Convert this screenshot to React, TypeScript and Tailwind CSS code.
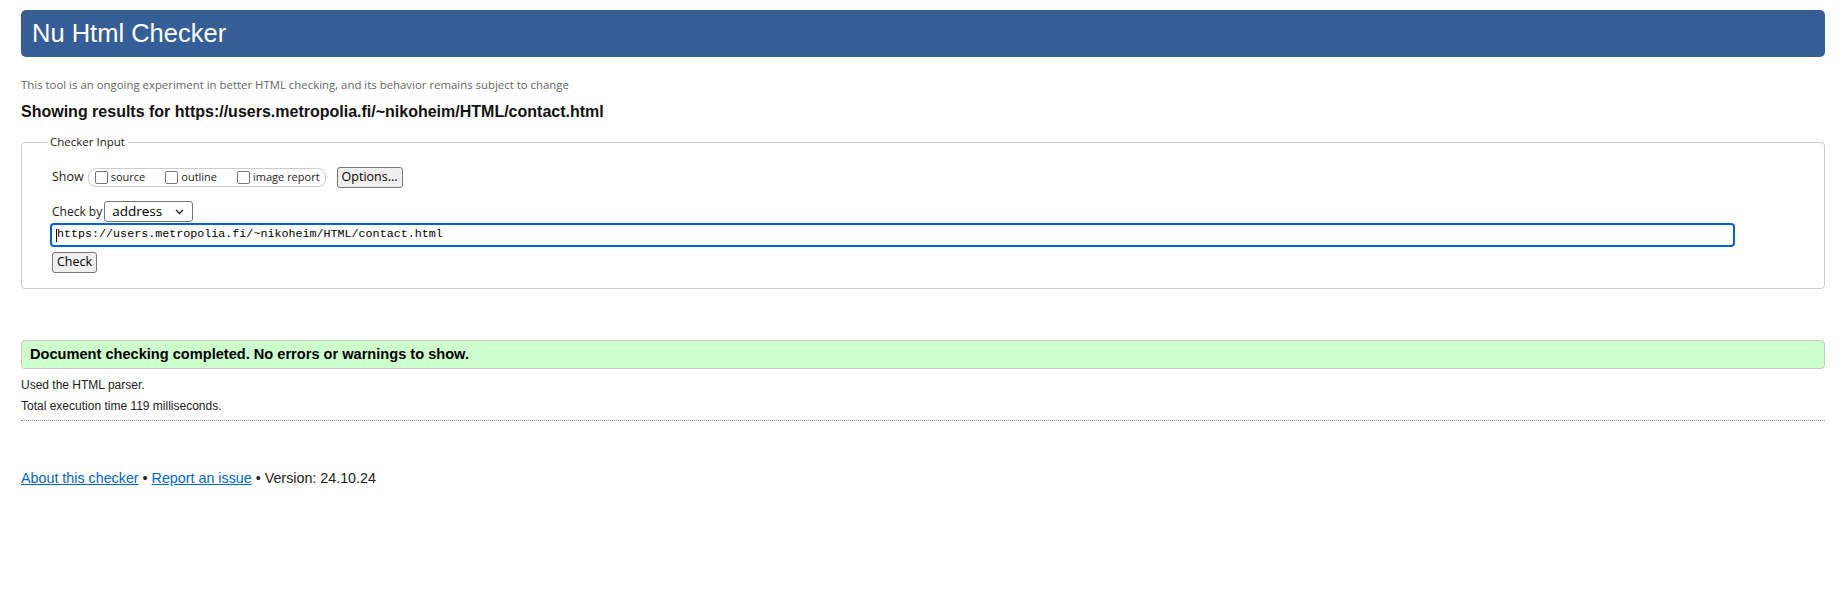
export default function App() {
  const sans = { fontFamily: '"Liberation Sans", Arial, sans-serif' };
  const ui = { fontFamily: '"Open Sans", "Noto Sans", sans-serif' };

  return (
    <div className="min-h-[603px] bg-white px-[21px] pt-[10px] text-[#222]" style={sans}>
      {/* HEADER */}
      <div className="flex h-[47px] items-center rounded-[5px] bg-[#365e96] px-[11px]">
        <h1 className="text-[25.5px] font-normal leading-none text-white">Nu Html Checker</h1>
      </div>

      <p className="mt-[21px] text-[11.4px] leading-[14px] text-[#666]" style={ui}>
        This tool is an ongoing experiment in better HTML checking, and its behavior remains subject to change
      </p>

      <h2 className="mt-[10px] text-[16px] font-bold leading-[20px] text-[#111]">
        Showing results for https://users.metropolia.fi/~nikoheim/HTML/contact.html
      </h2>

      {/* CHECKER INPUT */}
      <fieldset className="mt-[12px] rounded-[4px] border border-[#cccccc]">
        <legend className="ml-[25px] px-[3px] text-[11.5px] leading-[16px] text-[#222]" style={ui}>
          Checker Input
        </legend>

        <div className="pb-[15px] pl-[30px]">
          <div className="mt-[16px] flex h-[22px] items-center" style={ui}>
            <span className="text-[12.5px] text-[#222]">Show</span>
            <div className="ml-[4px] flex h-[19px] items-center rounded-[8px] border border-[#cccccc] pl-[6px] pr-[5px]">
              <label className="flex items-center">
                <span className="h-[13px] w-[13px] rounded-[2px] border border-[#767676] bg-white" />
                <span className="ml-[3px] mr-[20px] text-[11px] text-[#222]">source</span>
              </label>
              <label className="flex items-center">
                <span className="h-[13px] w-[13px] rounded-[2px] border border-[#767676] bg-white" />
                <span className="ml-[3px] mr-[20px] text-[11px] text-[#222]">outline</span>
              </label>
              <label className="flex items-center">
                <span className="h-[13px] w-[13px] rounded-[2px] border border-[#767676] bg-white" />
                <span className="ml-[3px] text-[11px] text-[#222]">image report</span>
              </label>
            </div>
            <button className="ml-[11px] h-[21px] w-[66px] rounded-[3px] border border-[#767676] bg-[#efefef] text-[12.5px] leading-none text-black">
              Options...
            </button>
          </div>

          <div className="mt-[13px] flex h-[21px] items-center" style={ui}>
            <span className="text-[12px] text-[#222]">Check by</span>
            <div className="ml-[2px] flex h-[21px] w-[89px] items-center justify-between rounded-[3px] border border-[#767676] bg-white pl-[7px] pr-[8px]">
              <span className="text-[13.5px] leading-none text-black">address</span>
              <svg width="9" height="6" viewBox="0 0 9 6" fill="none">
                <path d="M1 1l3.5 3.5L8 1" stroke="#222" strokeWidth="1.3" />
              </svg>
            </div>
          </div>

          <div className="-ml-[2px] mt-[1px] flex h-[24px] w-[1685px] items-center rounded-[4px] border-2 border-[#0060df] bg-white pl-[4px]">
            <span className="h-[13px] w-px bg-black" />
            <span
              className="text-[11.7px] leading-none text-black"
              style={{ fontFamily: '"Liberation Mono", "DejaVu Sans Mono", monospace' }}
            >
              https://users.metropolia.fi/~nikoheim/HTML/contact.html
            </span>
          </div>

          <button
            className="mt-[5px] h-[21px] w-[45px] rounded-[3px] border border-[#767676] bg-[#efefef] text-[12.5px] leading-none text-black"
            style={ui}
          >
            Check
          </button>
        </div>
      </fieldset>

      {/* RESULT */}
      <div className="mt-[51px] flex h-[29px] items-center rounded-[4px] border border-[#c8c8c8] bg-[#ccffcc] px-[8px]">
        <p className="text-[14.6px] font-bold leading-none text-black">
          Document checking completed. No errors or warnings to show.
        </p>
      </div>

      <p className="mt-[6px] text-[12px] leading-[21px] text-[#222]">Used the HTML parser.</p>
      <p className="text-[12px] leading-[21px] text-[#222]">Total execution time 119 milliseconds.</p>

      <hr className="mt-[3px] border-0 border-t border-dotted border-[#999]" />

      {/* FOOTER */}
      <p className="mt-[48px] text-[14.3px] leading-[18px] text-[#222]">
        <a href="#" className="text-[#0066cc] underline">About this checker</a>
        {" • "}
        <a href="#" className="text-[#0066cc] underline">Report an issue</a>
        {" • Version: 24.10.24"}
      </p>
    </div>
  );
}
